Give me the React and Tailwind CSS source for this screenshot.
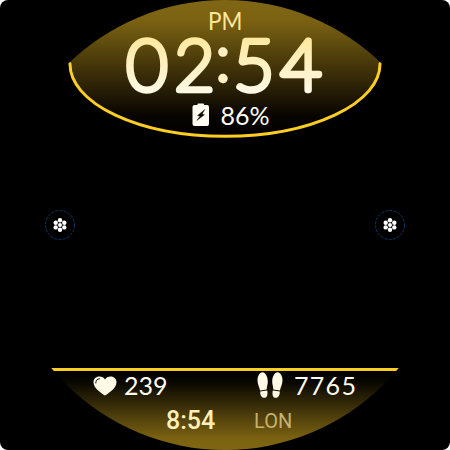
import React from "react";

const digits = [
  { c: "0", x: 147, s: 1 },
  { c: "2", x: 194.5, s: 0.98 },
  { c: "5", x: 254, s: 1 },
  { c: "4", x: 301, s: 1 },
];

function Dial() {
  return (
    <svg className="absolute inset-0" width="450" height="450" viewBox="0 0 450 450">
      <defs>
        <linearGradient id="top" gradientUnits="userSpaceOnUse" x1="0" y1="0" x2="0" y2="136">
          <stop offset="0" stopColor="#806614" />
          <stop offset="0.15" stopColor="#7b6212" />
          <stop offset="0.85" stopColor="#080500" />
          <stop offset="1" stopColor="#000" />
        </linearGradient>
        <linearGradient id="bottom" gradientUnits="userSpaceOnUse" x1="0" y1="370" x2="0" y2="450">
          <stop offset="0" stopColor="#000" />
          <stop offset="0.15" stopColor="#080600" />
          <stop offset="0.85" stopColor="#7a6212" />
          <stop offset="1" stopColor="#806614" />
        </linearGradient>
        <clipPath id="face"><circle cx="225" cy="225" r="225" /></clipPath>
      </defs>
      <g clipPath="url(#face)">
        <path d="M60 0H390L381 64A156 72 0 0 1 69 64Z" fill="url(#top)" />
        <path d="M68 61L70 64A155 72.3 0 0 0 380 64L382 61" fill="none" stroke="#ffce22" strokeWidth="3" />
        <rect x="40" y="370" width="370" height="80" fill="url(#bottom)" />
        <rect x="40" y="368" width="370" height="3" fill="#ffce22" />
      </g>
    </svg>
  );
}

function BigTime() {
  return (
    <svg width="210" height="64" viewBox="120 33 210 64" className="block overflow-visible">
      <defs>
        <linearGradient id="ink" gradientUnits="userSpaceOnUse" x1="0" y1="-52" x2="0" y2="3">
          <stop offset="0" stopColor="#ffe99f" />
          <stop offset="1" stopColor="#fff9e6" />
        </linearGradient>
      </defs>
      {digits.map((d) => (
        <text key={d.x} transform={`translate(${d.x} 90) scale(${d.s} 1)`} textAnchor="middle" fontFamily="Lato, sans-serif" fontWeight="100" fontSize="70.500" fill="url(#ink)" stroke="url(#ink)" strokeWidth="6.600" strokeLinejoin="round" strokeLinecap="round">{d.c}</text>
      ))}
      <text transform="translate(223 80)" textAnchor="middle" fontFamily="Lato, sans-serif" fontWeight="100" fontSize="62" fill="#fff1c4" stroke="#fff1c4" strokeWidth="5.500" strokeLinejoin="round">:</text>
    </svg>
  );
}

function Battery() {
  return (
    <svg width="18" height="24" viewBox="0 0 18 24">
      <path d="M5.500 2V1.200Q5.500.5 6.300.5H11.200Q12 .5 12 1.200V2H15Q17 2 17 4V21Q17 23 15 23H2.500Q.5 23 .5 21V4Q.5 2 2.500 2Z" fill="#fffdf4" />
      <path d="M12.800 6.500L5.500 12.500L8 13.300L4.800 17.500L12.500 11.800L10.200 11Z" fill="#100d02" stroke="#100d02" strokeWidth="0.400" />
    </svg>
  );
}

function Heart() {
  return (
    <svg width="24" height="20" viewBox="0 0 24 20">
      <path d="M12 19.500C9 17.500.5 12.500.5 6.200C.5 2.800 3 .5 6.300.5C9 .5 11 1.500 12 3.500C13 1.500 15 .5 17.700.5C21 .5 23.500 2.800 23.500 6.200C23.500 12.500 15 17.500 12 19.500Z" fill="#fff9e6" />
      <path d="M2.800 7C2.600 4.500 4 3 6.500 2.700" fill="none" stroke="#171204" strokeWidth="1" strokeLinecap="round" />
    </svg>
  );
}

function Steps() {
  return (
    <svg width="26" height="27" viewBox="0 0 26 27" fill="#fff9e6">
      <path id="sole" d="M5.500.3C8.500.3 10.800 5 10.800 9.500C10.800 12.800 9.700 14.500 9.700 17.500L3 18.500C2.700 15.500.5 12.500.5 8.500C.5 4 2.500.3 5.500.3ZM3.200 19.500L10.200 18.500C11 22.500 10.200 25.800 7.400 25.800C4.600 25.800 3.200 23.500 3.200 19.500Z" />
      <use href="#sole" transform="translate(26 0) scale(-1 1)" />
    </svg>
  );
}

function Flower() {
  return (
    <svg width="30" height="30" viewBox="0 0 30 30">
      <circle cx="15" cy="15" r="14.500" fill="#000" stroke="#0d4580" strokeWidth="0.800" strokeDasharray="3 1.200" />
      <g fill="#fff">
        <circle cx="15" cy="15" r="2" />
        <circle cx="15" cy="10.300" r="2.200" />
        <circle cx="15" cy="19.700" r="2.200" />
        <circle cx="10.700" cy="12.700" r="2.200" />
        <circle cx="19.300" cy="12.700" r="2.200" />
        <circle cx="10.700" cy="17.400" r="2.200" />
        <circle cx="19.300" cy="17.400" r="2.200" />
      </g>
    </svg>
  );
}

export default function App() {
  return (
    <div className="h-[450px] w-[450px] bg-white">
      <div className="relative h-full w-full overflow-hidden rounded-lg bg-black font-['Lato',sans-serif]">
        <Dial />
        <div className="relative flex h-full flex-col">
          <header className="flex h-[136px] flex-col items-center pt-[8px]">
            <div className="h-[25px] scale-x-90 text-[25px] leading-[24px] text-[#ffe898]">PM</div>
            <BigTime />
            <div className="mt-[6px] flex h-[24px] items-center gap-[10px] pl-[12px] text-[25px] leading-[24px] text-[#fffdf4]">
              <Battery />
              <span>86%</span>
            </div>
          </header>
          <main className="flex h-[178px] items-center justify-between px-[45px]">
            <Flower />
            <Flower />
          </main>
          <footer className="pt-[58px]">
            <div className="flex h-[27px] items-center text-[25px] leading-[27px] text-[#fffbec]">
              <div className="ml-[93px] flex w-[164px] items-center gap-[7px]">
                <Heart />
                <span>239</span>
              </div>
              <div className="flex items-center gap-[11px]">
                <Steps />
                <span className="tracking-[1.3px]">7765</span>
              </div>
            </div>
            <div className="mt-[8px] flex h-[28px] items-center font-['Roboto',sans-serif]">
              <span className="ml-[166px] w-[88px] text-[25px] leading-[28px] font-medium text-[#ffefb8]">8:54</span>
              <span className="text-[20px] leading-[28px] text-[#c8b26c]">LON</span>
            </div>
          </footer>
        </div>
      </div>
    </div>
  );
}
